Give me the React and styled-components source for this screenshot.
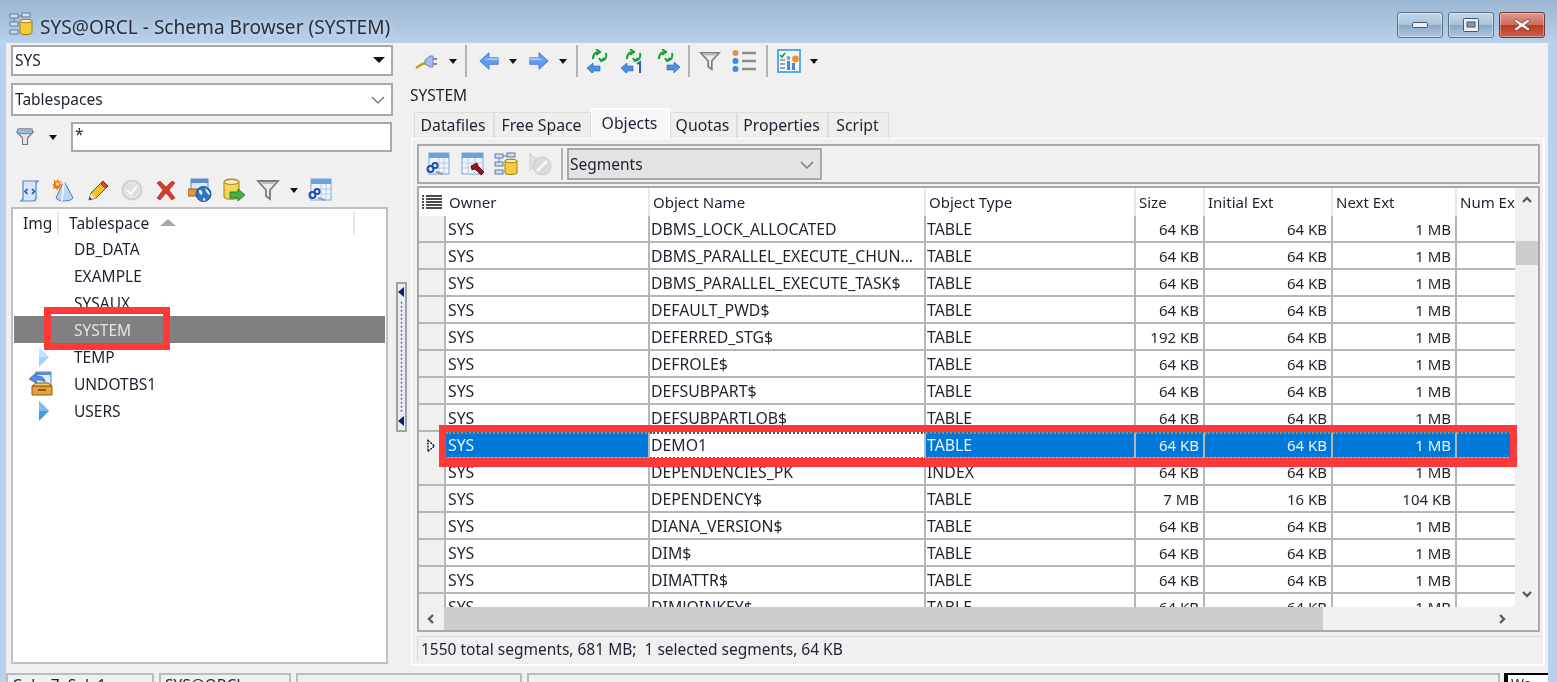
import React from "react";
import styled, { createGlobalStyle } from "styled-components";

const GlobalStyle = createGlobalStyle`
  html, body {
    margin: 0;
    padding: 0;
    background: #b9d1ea;
    overflow: hidden;
  }
  * {
    box-sizing: border-box;
  }
`;

const TEXT = "#1c2230";
const LINE = "#a9a9a9";
const GRID_LINE = "#b6b6b6";

const Window = styled.div`
  position: relative;
  width: 1557px;
  height: 682px;
  overflow: hidden;
  display: flex;
  flex-direction: column;
  background: linear-gradient(180deg, #9bb6d2 0, #b9d1ea 43px);
  font-family: "Noto Sans", "Liberation Sans", sans-serif;
  font-size: 15.5px;
  color: ${TEXT};
  filter: blur(0.4px);
`;

const TitleBar = styled.div`
  height: 43px;
  flex: none;
  display: flex;
  align-items: flex-start;
  padding: 12px 12px 0 9px;
`;

const TitleText = styled.div`
  margin: 3px 0 0 7px;
  font-size: 19.1px;
  line-height: 24px;
  color: #26303e;
  text-shadow: 0 0 6px rgba(255, 255, 255, 0.55);
`;

const WindowButtons = styled.div`
  margin-left: auto;
  display: flex;
  gap: 5px;
`;

const WindowButton = styled.div`
  width: 46px;
  height: 26px;
  border: 1px solid ${(p) => (p.$close ? "#70383a" : "#5e7286")};
  border-radius: 3px;
  display: flex;
  align-items: center;
  justify-content: center;
  background: ${(p) =>
    p.$close
      ? "linear-gradient(180deg,#dc9a8c 0,#cf6d5c 48%,#b93a22 52%,#cc6350 100%)"
      : "linear-gradient(180deg,#c5d7e9 0,#a9c2da 48%,#8ba9c8 52%,#adc6df 100%)"};
  box-shadow: inset 0 0 0 1px rgba(255, 255, 255, 0.35);
`;

const Client = styled.div`
  flex: 1;
  min-height: 0;
  margin: 0 9px 0 6px;
  background: #f0f0f0;
  display: flex;
  flex-direction: column;
`;

const Body = styled.div`
  height: 630px;
  flex: none;
  display: flex;
`;

const LeftPane = styled.div`
  width: 387px;
  flex: none;
  padding: 2px 0 0 5px;
  display: flex;
  flex-direction: column;
`;

const Combo = styled.div`
  height: ${(p) => p.$h}px;
  margin-bottom: ${(p) => p.$mb || 0}px;
  flex: none;
  display: flex;
  align-items: center;
  justify-content: space-between;
  padding: 0 ${(p) => p.$pr || 6}px ${(p) => p.$pb ?? 2}px ${(p) => p.$pl || 2}px;
  background: ${(p) => p.$bg || "#fff"};
  border: 2px solid ${LINE};
`;

const FilterRow = styled.div`
  height: 30px;
  flex: none;
  display: flex;
  align-items: center;
  padding: 0 1px 0 4px;
`;

const FilterGap = styled.span`
  width: 14px;
  flex: none;
`;

const FilterInput = styled.div`
  margin-left: auto;
  width: 321px;
  height: 30px;
  background: #fff;
  border: 2px solid ${LINE};
  padding: 0 2px;
  line-height: 20px;
`;

const LeftTools = styled.div`
  height: 24px;
  margin: 26px 0 5px;
  flex: none;
  display: flex;
  align-items: center;
  padding-left: 7px;
  gap: 10px;
`;

const Tree = styled.div`
  width: 377px;
  height: 457px;
  flex: none;
  background: #fff;
  border: 2px solid #c0c0c0;
`;

const TreeHead = styled.div`
  height: 26px;
  padding-top: 1px;
  display: flex;
  align-items: center;
`;

const TreeHeadCell = styled.div`
  width: ${(p) => p.$w}px;
  height: 24px;
  padding-left: 10px;
  display: flex;
  align-items: center;
  border-right: 2px solid #e6e6e6;
`;

const SortMark = styled.span`
  margin-left: 11px;
  border-left: 8px solid transparent;
  border-right: 8px solid transparent;
  border-bottom: 7px solid #a8a8a8;
`;

const TreeRow = styled.div`
  height: 27px;
  margin-left: 1px;
  width: 371px;
  display: flex;
  align-items: center;
  background: ${(p) => (p.$selected ? "#808080" : "transparent")};
  color: ${(p) => (p.$selected ? "#e4e4e4" : TEXT)};
`;

const TreeIcon = styled.div`
  width: 60px;
  height: 25px;
  flex: none;
  display: flex;
  align-items: center;
  justify-content: center;
  padding-left: 2px;
`;

const SplitCol = styled.div`
  width: 17px;
  flex: none;
  padding: 239px 0 0 3px;
`;

const SplitHandle = styled.div`
  width: 11px;
  height: 150px;
  background: #ececec;
  border: 2px solid #a0a0a0;
`;

const RightPane = styled.div`
  flex: 1;
  min-width: 0;
  display: flex;
  flex-direction: column;
`;

const MainTools = styled.div`
  height: 30px;
  margin-top: 3px;
  flex: none;
  display: flex;
  align-items: center;
  padding-left: 5px;
`;

const Slot = styled.span`
  display: flex;
  flex: none;
  margin-right: ${(p) => p.$mr || 0}px;
`;

const Caret = styled.span`
  flex: none;
  width: 0;
  height: 0;
  margin-right: ${(p) => p.$mr || 0}px;
  border-left: ${(p) => (p.$big ? 6 : 4)}px solid transparent;
  border-right: ${(p) => (p.$big ? 6 : 4)}px solid transparent;
  border-top: ${(p) => (p.$big ? 6 : 5)}px solid #111;
`;

const ToolSep = styled.span`
  flex: none;
  width: 2px;
  height: ${(p) => p.$h || 32}px;
  margin-right: ${(p) => p.$mr || 0}px;
  background: #b4b4b4;
`;

const PaneLabel = styled.div`
  height: 24px;
  margin-top: 7px;
  flex: none;
  line-height: 24px;
`;

const Tabs = styled.div`
  height: 28px;
  margin-top: 3px;
  padding-left: 4px;
  flex: none;
  display: flex;
  align-items: flex-end;
`;

const Tab = styled.div`
  width: ${(p) => p.$w}px;
  height: ${(p) => (p.$active ? 32 : 26)}px;
  margin-bottom: ${(p) => (p.$active ? -2 : 0)}px;
  padding: 0 2px ${(p) => (p.$active ? 4 : 2)}px 0;
  flex: none;
  display: flex;
  align-items: center;
  justify-content: center;
  position: relative;
  z-index: ${(p) => (p.$active ? 1 : 0)};
  background: ${(p) => (p.$active ? "#f7f7f7" : "#eeeeee")};
  border: 1px solid ${(p) => (p.$active ? "#fff" : "#dcdcdc")};
  border-bottom: none;
  font-size: 15.8px;
`;

const TabPanel = styled.div`
  width: 1134px;
  height: 528px;
  margin-left: 1px;
  flex: none;
  padding: 5px 3px 0 5px;
  background: #f0f0f0;
  border: 1px solid #fff;
  border-width: 1px 2px 2px 1px;
`;

const InnerTools = styled.div`
  height: 40px;
  flex: none;
  display: flex;
  align-items: center;
  padding-left: 7px;
  margin-bottom: 2px;
  border: 2px solid ${LINE};
`;

const DataGrid = styled.div`
  height: 446px;
  flex: none;
  display: flex;
  flex-direction: column;
  border: 2px solid ${LINE};
`;

const GridMain = styled.div`
  height: 419px;
  flex: none;
  display: flex;
`;

const GridData = styled.div`
  width: 1096px;
  flex: none;
  overflow: hidden;
  background: #fff;
`;

const COLUMNS = "27px 204px 276px 210px 69px 128px 124px 58px";

const HeadRow = styled.div`
  display: grid;
  grid-template-columns: ${COLUMNS};
  height: 28px;
  font-size: 15px;
`;

const HeadCell = styled.div`
  padding-left: 3px;
  line-height: 28px;
  white-space: nowrap;
  overflow: hidden;
  border-right: ${(p) => (p.$last ? "none" : "2px solid #e8e8e8")};
`;

const HeadCorner = styled.div`
  display: flex;
  align-items: center;
  padding-left: 3px;
`;

const DataRow = styled.div`
  display: grid;
  grid-template-columns: ${COLUMNS};
  height: 27px;
  border-bottom: 2px solid ${GRID_LINE};
  background: ${(p) => (p.$selected ? "#0078d7" : "#fff")};
  color: ${(p) => (p.$selected ? "#e9f3fc" : TEXT)};
`;

const RowHeader = styled.div`
  display: flex;
  align-items: center;
  padding-left: 7px;
  background: #f0f0f0;
  border-right: 2px solid ${GRID_LINE};
  margin-bottom: ${(p) => (p.$selected ? -2 : 0)}px;
`;

const Cell = styled.div`
  padding: ${(p) => (p.$num ? "0 4px 0 0" : `0 0 0 ${p.$pl ?? 1}px`)};
  text-align: ${(p) => (p.$num ? "right" : "left")};
  font-size: ${(p) => (p.$num ? 15 : 15.8)}px;
  line-height: 27px;
  white-space: nowrap;
  overflow: hidden;
  border-right: ${(p) => (p.$last ? "none" : `2px solid ${GRID_LINE}`)};
  ${(p) =>
    p.$selected &&
    `
    border-top: 2px dotted ${p.$focus ? "#555" : "#a08a6a"};
    border-bottom: 2px dotted ${p.$focus ? "#555" : "#a08a6a"};
    line-height: 23px;
    margin-bottom: -2px;
    height: 27px;
  `}
  ${(p) => p.$focus && "background: #fff; color: #1c2230;"}
`;

const VScroll = styled.div`
  flex: 1;
  position: relative;
  display: flex;
  flex-direction: column;
  align-items: center;
  justify-content: space-between;
  padding: 6px 0 7px 1px;
  background: #f0f0f0;
`;

const VThumb = styled.div`
  position: absolute;
  left: 1px;
  right: 0;
  top: 53px;
  height: 24px;
  background: #cdcdcd;
`;

const HScroll = styled.div`
  flex: 1;
  display: flex;
  align-items: center;
  padding: 0 30px 0 6px;
  background: #f0f0f0;
`;

const HThumb = styled.div`
  width: 879px;
  height: 23px;
  margin-left: 7px;
  background: #cdcdcd;
`;

const HEnd = styled.div`
  margin-left: auto;
  display: flex;
`;

const InfoBar = styled.div`
  height: 25px;
  margin-top: 4px;
  padding-left: 3px;
  line-height: 24px;
  border-left: 1px solid #d8d8d8;
  border-top: 1px solid #d8d8d8;
  white-space: pre;
`;

const StatusBar = styled.div`
  flex: 1;
  display: flex;
  gap: 5px;
`;

const StatusPane = styled.div`
  width: ${(p) => p.$w}px;
  flex: ${(p) => (p.$w ? "none" : 1)};
  border: 2px solid #bcbcbc;
  border-bottom: none;
  padding-left: 4px;
  line-height: 20px;
  white-space: pre;
  overflow: hidden;
`;

const ClockBox = styled.div`
  width: 44px;
  flex: none;
  margin-left: -1px;
  border-left: 4px solid #000;
  border-top: 2px solid #000;
  background: #fff;
  font-size: 14px;
  line-height: 18px;
  padding-left: 3px;
  overflow: hidden;
  color: #222;
`;

const RedBox = styled.div`
  position: absolute;
  left: ${(p) => p.$x}px;
  top: ${(p) => p.$y}px;
  width: ${(p) => p.$w}px;
  height: ${(p) => p.$h}px;
  border: 7px solid #ff3838;
  border-bottom-width: ${(p) => p.$bb || 7}px;
  pointer-events: none;
`;

const Ico = ({ w = 24, h = 24, children }) => (
  <svg width={w} height={h} viewBox="0 0 24 24" style={{ flex: "none", display: "block" }}>
    {children}
  </svg>
);

const Chevron = ({ dir }) => {
  const d = {
    up: "M2 8 L6 4 L10 8",
    down: "M2 4 L6 8 L10 4",
    left: "M8 2 L4 6 L8 10",
    right: "M4 2 L8 6 L4 10",
  }[dir];
  return (
    <svg width="12" height="12" viewBox="0 0 12 12" style={{ display: "block" }}>
      <path d={d} fill="none" stroke="#5c5c5c" strokeWidth="2.4" />
    </svg>
  );
};

const ComboChevron = () => (
  <svg width="14" height="10" viewBox="0 0 14 10" style={{ display: "block", marginTop: 2 }}>
    <path d="M1 2 L7 8 L13 2" fill="none" stroke="#7c7c7c" strokeWidth="1.5" />
  </svg>
);

const SchemaIcon = () => (
  <Ico>
    <g fill="#cfdcea" stroke="#5f7fa3" strokeWidth="1">
      <rect x="1" y="2" width="8" height="4" />
      <rect x="1" y="10" width="8" height="4" />
      <rect x="1" y="18" width="8" height="4" />
      <rect x="13" y="1" width="8" height="4" />
    </g>
    <path d="M5 6v4M9 4h4" stroke="#5f7fa3" fill="none" />
    <path d="M11 9c0-2 12-2 12 0v12c0 2-12 2-12 0z" fill="#f4cd3e" stroke="#a07c10" />
    <ellipse cx="17" cy="9" rx="6" ry="1.8" fill="#fbeeb0" stroke="#a07c10" />
  </Ico>
);

const ScrollIcon = () => (
  <Ico>
    <path d="M5 3h15l-2 2v15c0 2-1 3-3 3H3l2-2z" fill="#d6e6f8" stroke="#4c86c6" strokeWidth="1.2" />
    <path d="M9.5 11l-2.5 2.5 2.5 2.5M14 11l2.5 2.5-2.5 2.5" fill="none" stroke="#1f55b0" strokeWidth="1.6" />
  </Ico>
);

const ConeIcon = () => (
  <Ico>
    <path d="M12 3L21 20c-2 4-15 4-17 0z" fill="#bcd3f2" stroke="#4f7cc0" />
    <path d="M12 3l-2 20" stroke="#e8f1fc" fill="none" strokeWidth="2" />
    <path d="M2 1l2 3 2-3 1 3 3-1-2 3 3 1-3 1 1 3-3-1-1 3-1-3-3 1 1-3-2-1 2-1z" fill="#ef6a1c" />
    <circle cx="5.5" cy="6" r="2" fill="#ffdc4a" />
  </Ico>
);

const PencilIcon = () => (
  <Ico>
    <path d="M3 22l2-7L17 3l5 5L10 20z" fill="#f2c12e" stroke="#6b5312" strokeWidth="1" />
    <path d="M17 3l5 5-2.5 2.5-5-5z" fill="#d9443a" stroke="#7a1f18" strokeWidth="0.8" />
    <path d="M3 22l2-7 5 5z" fill="#f1dcbc" />
    <path d="M3 22l.8-3 2.2 2.2z" fill="#222" />
  </Ico>
);

const GrayCheckIcon = () => (
  <Ico>
    <circle cx="12" cy="12" r="10.5" fill="#d2d2d2" />
    <circle cx="12" cy="12" r="7.5" fill="#dedede" stroke="#f0f0f0" />
    <path d="M7 12l4 4 6-8" fill="none" stroke="#f7f7f7" strokeWidth="2.4" />
  </Ico>
);

const RedXIcon = () => (
  <Ico>
    <path d="M3 5l3-2 6 6 6-6 3 2-6 7 6 8-3 2-6-7-6 7-3-2 6-8z" fill="#d83a2e" stroke="#9c1f16" strokeWidth="0.6" />
  </Ico>
);

const WindowGlobeIcon = () => (
  <Ico>
    <rect x="3" y="1" width="17" height="15" fill="#dce8f6" stroke="#5c86bd" />
    <rect x="3" y="1" width="17" height="4" fill="#5d8fd0" />
    <rect x="0" y="11" width="10" height="7" fill="#e59a35" stroke="#9a5f12" />
    <circle cx="15.5" cy="16" r="7.5" fill="#2f75c5" stroke="#1c4f90" />
    <path d="M11 12c3 0 4 2 3 4s-3 0-3-4zM17 10c3 2 5 4 5 7-2 0-4-3-5-7zM15 20c2 0 3 1 2 3-2 0-2-1-2-3z" fill="#e8f2d8" />
  </Ico>
);

const DbArrowIcon = () => (
  <Ico>
    <path d="M2 4c0-4 15-4 15 0v15c0 3-15 3-15 0z" fill="#f6d456" stroke="#a07c10" />
    <ellipse cx="9.5" cy="4" rx="7.5" ry="2.4" fill="#fbf1c0" stroke="#a07c10" />
    <path d="M8 14h8v-3l7 6-7 6v-3H8z" fill="#3fb04a" stroke="#1d6f26" strokeWidth="0.8" />
  </Ico>
);

const FunnelIcon = ({ w = 24, h = 24 }) => (
  <Ico w={w} h={h}>
    <path d="M2 3h20l-8 9v9l-4-3v-6z" fill="#ececec" stroke="#7c7c7c" strokeWidth="1.8" />
    <path d="M6 5h12" stroke="#b4b4b4" strokeWidth="1.6" />
  </Ico>
);

const FilterIcon = () => (
  <Ico w={20} h={20}>
    <path d="M2 6h20l-7 7v8l-6 0v-8z" fill="#e6e6e6" stroke="#7a7a7a" strokeWidth="1.4" />
    <rect x="3" y="2" width="18" height="6" rx="1" fill="#8fbbe6" stroke="#7a7a7a" />
  </Ico>
);

const GridKeyIcon = () => (
  <Ico>
    <rect x="3" y="1" width="20" height="21" fill="#eef4fb" stroke="#7ba6d8" />
    <rect x="3" y="1" width="20" height="5" fill="#6da2de" />
    <path d="M9 11h14M9 16h14M13 6v16M18 6v16" stroke="#b4cde8" fill="none" />
    <circle cx="4.5" cy="17" r="3" fill="none" stroke="#1e50a8" strokeWidth="2" />
    <circle cx="9" cy="13.5" r="2.6" fill="none" stroke="#1e50a8" strokeWidth="2" />
    <path d="M10 20l7 2" stroke="#999" strokeWidth="2" />
  </Ico>
);

const GridPointerIcon = () => (
  <Ico>
    <rect x="1" y="1" width="21" height="21" fill="#eef4fb" stroke="#7ba6d8" />
    <rect x="1" y="1" width="21" height="5" fill="#6da2de" />
    <path d="M1 11h21M1 16h21M7 6v16M14 6v16" stroke="#b4cde8" fill="none" />
    <path d="M10 14l6-3 1 3 6 6-3 3-6-6-3 1z" fill="#a30f12" stroke="#4c0506" strokeWidth="0.8" />
  </Ico>
);

const GrayPieIcon = () => (
  <Ico>
    <path d="M2 1l9 9-9 9z" fill="#e2e2e2" stroke="#d0d0d0" />
    <circle cx="14" cy="14" r="9" fill="#dadada" stroke="#cacaca" />
    <path d="M9 19L19 9" stroke="#f6f6f6" strokeWidth="3" />
  </Ico>
);

const PlugIcon = () => (
  <Ico>
    <path d="M1 19l6-4 4-1" fill="none" stroke="#c69a1f" strokeWidth="2.4" />
    <path d="M10 11l5-4h3v11h-3l-5-3z" fill="#a3bfe9" stroke="#6786bd" />
    <path d="M18 10h4M18 15h4" stroke="#8a8a8a" strokeWidth="1.8" />
  </Ico>
);

const NavArrow = ({ flip }) => (
  <Ico w={20} h={24}>
    <g transform={flip ? "translate(24 0) scale(-1 1)" : undefined}>
      <path d="M1 12L12 2v6h11v8H12v6z" fill="#5d9cf0" stroke="#3b74cc" strokeWidth="1" />
      <path d="M12 8h11v3H6z" fill="#9cc4f8" />
    </g>
  </Ico>
);

const Sync = () => (
  <g fill="none" stroke="#19a136" strokeWidth="2">
    <path d="M6 10c0-4 2-7 6-7M9 0l4 3-4 3" />
    <path d="M19 4c1 4-1 7-5 8M12 9l2 3 3-3" />
  </g>
);

const RefreshLeft = () => (
  <Ico>
    <Sync />
    <path d="M0 19l6-5v3h7v5H6v3z" fill="#4b8ee6" stroke="#2e62b8" strokeWidth="0.6" />
  </Ico>
);

const RefreshOne = () => (
  <Ico>
    <Sync />
    <path d="M0 19l6-5v3h6v5H6v3z" fill="#4b8ee6" stroke="#2e62b8" strokeWidth="0.6" />
    <path d="M16 15l3-2v11" fill="none" stroke="#2e62b8" strokeWidth="2" />
  </Ico>
);

const RefreshRight = () => (
  <Ico>
    <g transform="translate(-3 0)">
      <Sync />
    </g>
    <path d="M24 18l-6-5v3h-7v5h7v3z" fill="#4b8ee6" stroke="#2e62b8" strokeWidth="0.6" />
  </Ico>
);

const ListIcon = () => (
  <Ico>
    <circle cx="3.5" cy="4" r="3" fill="#e8913a" />
    <circle cx="3.5" cy="12" r="3" fill="#4a86e0" />
    <circle cx="3.5" cy="20" r="3" fill="#4a86e0" />
    <path d="M10 4h14M10 12h14M10 20h14" stroke="#8a8a8a" strokeWidth="2.6" />
  </Ico>
);

const PanelIcon = () => (
  <Ico>
    <rect x="1" y="1" width="22" height="22" fill="#f4f8fc" stroke="#45a3e6" strokeWidth="1.8" />
    <path d="M3 6l2 2 3-4" fill="none" stroke="#179a34" strokeWidth="1.6" />
    <path d="M3 11h5M3 15h5M3 19h5" stroke="#888" strokeWidth="1.4" />
    <rect x="10" y="12" width="3" height="9" fill="#4a86e0" />
    <rect x="15" y="14" width="3" height="7" fill="#4a86e0" />
    <circle cx="18.5" cy="10" r="3.4" fill="#ef8f2c" />
    <circle cx="11.5" cy="9" r="2" fill="#9a9a9a" />
  </Ico>
);

const TreeArrow = ({ pale }) => (
  <svg width="12" height="20" viewBox="0 0 12 20" style={{ display: "block", marginLeft: -2 }}>
    <path d="M1 0L11 10 1 20z" fill={pale ? "#a5d2f4" : "#3f9ee6"} />
    <path d="M1 0L11 10H1z" fill={pale ? "#c9e4f9" : "#7cc0f2"} />
  </svg>
);

const UndoBoxIcon = () => (
  <svg width="26" height="26" viewBox="0 0 26 26" style={{ display: "block", marginRight: 9, flex: "none" }}>
    <rect x="8" y="1" width="15" height="13" fill="#dde9f6" stroke="#5d86bd" />
    <rect x="8" y="1" width="15" height="3" fill="#5d8fd0" />
    <path d="M1 8l7-6v3c6 0 9 2 9 6-3-2-5-2-9-2v3z" fill="#4b8ee6" stroke="#2e62b8" strokeWidth="0.7" />
    <path d="M4 15h20v9H4z" fill="#e8a03a" stroke="#8f5a12" />
    <path d="M4 15l4-3h12l4 3z" fill="#f5c670" stroke="#8f5a12" />
    <rect x="10" y="18" width="8" height="2" fill="#8f5a12" />
  </svg>
);

const SplitMarks = () => (
  <svg width="7" height="146" viewBox="0 0 7 146" style={{ display: "block" }}>
    <path d="M6 3v10L0 8z" fill="#0d1a82" />
    <path d="M3.5 18V128" stroke="#3a46c8" strokeWidth="1.4" strokeDasharray="1.4 2.6" />
    <path d="M6 132v10l-6-5z" fill="#0d1a82" />
  </svg>
);

const RowMark = () => (
  <svg width="10" height="14" viewBox="0 0 10 14" style={{ display: "block" }}>
    <path d="M2 1.5L8.5 7 2 12.5z" fill="#fff" stroke="#111" strokeWidth="1.4" strokeDasharray="2 1" />
  </svg>
);

const ColumnsMark = () => (
  <svg width="20" height="14" viewBox="0 0 20 14" style={{ display: "block" }}>
    <path d="M0 1h2M4 1h16M0 4h2M4 4h16M0 7h2M4 7h16M0 10h2M4 10h16M0 13h2M4 13h16" stroke="#111" strokeWidth="1.4" />
  </svg>
);

const TABLESPACES = ["DB_DATA", "EXAMPLE", "SYSAUX", "SYSTEM", "TEMP", "UNDOTBS1", "USERS"];

const TABS = [
  ["Datafiles", 80],
  ["Free Space", 97],
  ["Objects", 79],
  ["Quotas", 67],
  ["Properties", 91],
  ["Script", 61],
];

const HEADERS = ["Owner", "Object Name", "Object Type", "Size", "Initial Ext", "Next Ext", "Num Ex"];

const SEGMENTS = [
  ["DBMS_LOCK_ALLOCATED"],
  ["DBMS_PARALLEL_EXECUTE_CHUN..."],
  ["DBMS_PARALLEL_EXECUTE_TASK$"],
  ["DEFAULT_PWD$"],
  ["DEFERRED_STG$", "TABLE", "192 KB"],
  ["DEFROLE$"],
  ["DEFSUBPART$"],
  ["DEFSUBPARTLOB$"],
  ["DEMO1"],
  ["DEPENDENCIES_PK", "INDEX"],
  ["DEPENDENCY$", "TABLE", "7 MB", "16 KB", "104 KB"],
  ["DIANA_VERSION$"],
  ["DIM$"],
  ["DIMATTR$"],
  ["DIMJOINKEY$"],
];

function TreeRowIcon({ name }) {
  if (name === "TEMP") return <TreeArrow pale />;
  if (name === "USERS") return <TreeArrow />;
  if (name === "UNDOTBS1") return <UndoBoxIcon />;
  return null;
}

function App() {
  return (
    <Window>
      <GlobalStyle />
      <TitleBar>
        <SchemaIcon />
        <TitleText>SYS@ORCL - Schema Browser (SYSTEM)</TitleText>
        <WindowButtons>
          <WindowButton>
            <svg width="16" height="8" viewBox="0 0 16 8">
              <rect x="0.5" y="1.5" width="15" height="5" rx="1" fill="#e8eef4" stroke="#44566a" />
            </svg>
          </WindowButton>
          <WindowButton>
            <svg width="16" height="14" viewBox="0 0 16 14">
              <rect x="0.5" y="0.5" width="15" height="13" rx="1" fill="#e8eef4" stroke="#44566a" />
              <rect x="4" y="4" width="8" height="5" fill="#7f9ab5" stroke="#44566a" />
            </svg>
          </WindowButton>
          <WindowButton $close>
            <svg width="18" height="14" viewBox="0 0 18 14">
              <path d="M3 1l6 4 6-4 2 2-5 4 5 4-2 2-6-4-6 4-2-2 5-4-5-4z" fill="#f4eeee" stroke="#6e3a38" strokeWidth="0.8" />
            </svg>
          </WindowButton>
        </WindowButtons>
      </TitleBar>

      <Client>
        <Body>
          <LeftPane>
            <Combo $h={31} $mb={7}>
              SYS
              <Caret $big />
            </Combo>
            <Combo $h={33} $mb={6}>
              Tablespaces
              <ComboChevron />
            </Combo>
            <FilterRow>
              <FilterIcon />
              <FilterGap />
              <Caret />
              <FilterInput>*</FilterInput>
            </FilterRow>
            <LeftTools>
              <ScrollIcon />
              <ConeIcon />
              <PencilIcon />
              <GrayCheckIcon />
              <RedXIcon />
              <WindowGlobeIcon />
              <DbArrowIcon />
              <FunnelIcon />
              <Caret />
              <GridKeyIcon />
            </LeftTools>
            <Tree>
              <TreeHead>
                <TreeHeadCell $w={46}>Img</TreeHeadCell>
                <TreeHeadCell $w={296}>
                  Tablespace
                  <SortMark />
                </TreeHeadCell>
              </TreeHead>
              {TABLESPACES.map((name) => (
                <TreeRow key={name} $selected={name === "SYSTEM"}>
                  <TreeIcon>
                    <TreeRowIcon name={name} />
                  </TreeIcon>
                  {name}
                </TreeRow>
              ))}
            </Tree>
          </LeftPane>

          <SplitCol>
            <SplitHandle>
              <SplitMarks />
            </SplitHandle>
          </SplitCol>

          <RightPane>
            <MainTools>
              <Slot $mr={10}><PlugIcon /></Slot>
              <Caret $mr={8} />
              <ToolSep $mr={12} />
              <Slot $mr={10}><NavArrow /></Slot>
              <Caret $mr={12} />
              <Slot $mr={10}><NavArrow flip /></Slot>
              <Caret $mr={9} />
              <ToolSep $mr={9} />
              <Slot $mr={10}><RefreshLeft /></Slot>
              <Slot $mr={11}><RefreshOne /></Slot>
              <Slot $mr={8}><RefreshRight /></Slot>
              <ToolSep $mr={9} />
              <Slot $mr={11}><FunnelIcon w={22} h={22} /></Slot>
              <Slot $mr={10}><ListIcon /></Slot>
              <ToolSep $mr={9} />
              <Slot $mr={9}><PanelIcon /></Slot>
              <Caret />
            </MainTools>
            <PaneLabel>SYSTEM</PaneLabel>
            <Tabs>
              {TABS.map(([label, w]) => (
                <Tab key={label} $w={w} $active={label === "Objects"}>
                  {label}
                </Tab>
              ))}
            </Tabs>
            <TabPanel>
              <InnerTools>
                <Slot $mr={11}><GridKeyIcon /></Slot>
                <Slot $mr={9}><GridPointerIcon /></Slot>
                <Slot $mr={10}><SchemaIcon /></Slot>
                <Slot $mr={9}><GrayPieIcon /></Slot>
                <ToolSep $h={32} $mr={4} />
                <Combo $h={32} $bg="#e3e3e3" $pl={1} $pb={0} style={{ width: 255 }}>
                  Segments
                  <ComboChevron />
                </Combo>
              </InnerTools>
              <DataGrid>
                <GridMain>
                  <GridData>
                    <HeadRow>
                      <HeadCorner>
                        <ColumnsMark />
                      </HeadCorner>
                      {HEADERS.map((h, i) => (
                        <HeadCell key={h} $last={i === HEADERS.length - 1}>
                          {h}
                        </HeadCell>
                      ))}
                    </HeadRow>
                    {SEGMENTS.map(([name, type = "TABLE", size = "64 KB", initial = "64 KB", next = "1 MB"]) => {
                      const selected = name === "DEMO1";
                      return (
                        <DataRow key={name} $selected={selected}>
                          <RowHeader $selected={selected}>{selected && <RowMark />}</RowHeader>
                          <Cell $selected={selected} $pl={2}>SYS</Cell>
                          <Cell $selected={selected} $focus={selected}>{name}</Cell>
                          <Cell $selected={selected}>{type}</Cell>
                          <Cell $selected={selected} $num>{size}</Cell>
                          <Cell $selected={selected} $num>{initial}</Cell>
                          <Cell $selected={selected} $num>{next}</Cell>
                          <Cell $selected={selected} $last />
                        </DataRow>
                      );
                    })}
                  </GridData>
                  <VScroll>
                    <VThumb />
                    <Chevron dir="up" />
                    <Chevron dir="down" />
                  </VScroll>
                </GridMain>
                <HScroll>
                  <Chevron dir="left" />
                  <HThumb />
                  <HEnd>
                    <Chevron dir="right" />
                  </HEnd>
                </HScroll>
              </DataGrid>
              <InfoBar>1550 total segments, 681 MB;  1 selected segments, 64 KB</InfoBar>
            </TabPanel>
          </RightPane>
        </Body>
        <StatusBar>
          <StatusPane $w={148}>Cols: 7  Sel: 1</StatusPane>
          <StatusPane $w={132}>SYS@ORCL</StatusPane>
          <StatusPane $w={226} />
          <StatusPane />
          <ClockBox>Wa</ClockBox>
        </StatusBar>
      </Client>

      <RedBox $x={44} $y={307} $w={126} $h={43} />
      <RedBox $x={439} $y={425} $w={1078} $h={42} $bb={9} />
    </Window>
  );
}

export default App;
